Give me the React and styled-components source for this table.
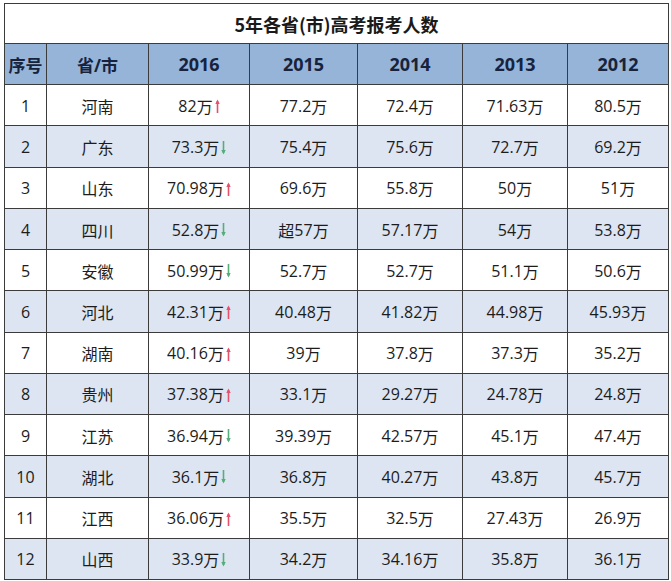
import React from "react";
import styled, { createGlobalStyle } from "styled-components";

const Global = createGlobalStyle`
  html, body { margin: 0; padding: 0; background: #ffffff; }
  body { font-family: "Open Sans", "Noto Sans CJK SC", sans-serif; }
`;

const Page = styled.div`
  padding: 3px 0 0 4px;
`;

const Grid = styled.div`
  display: grid;
  width: 665px;
  height: 577px;
  box-sizing: border-box;
  grid-template-columns: 41px 101px 100px 107px 104px 104px 100px;
  grid-template-rows: 39px repeat(13, 1fr);
  gap: 1px;
  padding: 1px;
  background: #3b3b3b;
`;

const Title = styled.div`
  grid-column: 1 / -1;
  background: #ffffff;
  display: flex;
  align-items: center;
  justify-content: center;
  font-family: "Noto Sans CJK SC", sans-serif;
  font-weight: 700;
  font-size: 18px;
  color: #1a1a1a;
  padding-top: 1px;
`;

const HeadCell = styled.div`
  background: #96b4d8;
  display: flex;
  align-items: center;
  justify-content: center;
  font-family: "Open Sans", "Noto Sans CJK SC", sans-serif;
  font-weight: 700;
  font-size: ${(p) => (p.$cjk ? "17px" : "18px")};
  color: #17233d;
  white-space: nowrap;
`;

const Cell = styled.div`
  background: ${(p) => (p.$shaded ? "#dce5f1" : "#ffffff")};
  display: flex;
  align-items: center;
  justify-content: center;
  font-family: "Open Sans", "Noto Sans CJK SC", sans-serif;
  font-size: 16px;
  color: #1c1c1c;
  white-space: nowrap;
  padding-top: 1px;
`;

const Cjk = styled.span`
  font-family: "Noto Sans CJK SC", sans-serif;
`;

const ArrowSvg = styled.svg`
  margin-left: 2px;
  margin-top: 1px;
  flex: none;
`;

function Arrow({ up }) {
  const color = up ? "#e6506b" : "#56ad7a";
  return (
    <ArrowSvg width="5" height="14" viewBox="0 0 5 14">
      {up ? (
        <>
          <line x1="2.5" y1="2" x2="2.5" y2="14" stroke={color} strokeWidth="1.6" />
          <polygon points="0.3,5 2.5,0.5 4.7,5" fill={color} />
        </>
      ) : (
        <>
          <line x1="2.5" y1="0" x2="2.5" y2="12" stroke={color} strokeWidth="1.6" />
          <polygon points="0.3,9 2.5,13.5 4.7,9" fill={color} />
        </>
      )}
    </ArrowSvg>
  );
}

function Value({ text }) {
  const m = text.match(/^(\D*)([\d.]+)(万)$/);
  if (!m) return <Cjk>{text}</Cjk>;
  return (
    <>
      {m[1] && <Cjk>{m[1]}</Cjk>}
      <span>{m[2]}</span>
      <Cjk>{m[3]}</Cjk>
    </>
  );
}

const rows = [
  ["河南", "82万", true, "77.2万", "72.4万", "71.63万", "80.5万"],
  ["广东", "73.3万", false, "75.4万", "75.6万", "72.7万", "69.2万"],
  ["山东", "70.98万", true, "69.6万", "55.8万", "50万", "51万"],
  ["四川", "52.8万", false, "超57万", "57.17万", "54万", "53.8万"],
  ["安徽", "50.99万", false, "52.7万", "52.7万", "51.1万", "50.6万"],
  ["河北", "42.31万", true, "40.48万", "41.82万", "44.98万", "45.93万"],
  ["湖南", "40.16万", true, "39万", "37.8万", "37.3万", "35.2万"],
  ["贵州", "37.38万", true, "33.1万", "29.27万", "24.78万", "24.8万"],
  ["江苏", "36.94万", false, "39.39万", "42.57万", "45.1万", "47.4万"],
  ["湖北", "36.1万", false, "36.8万", "40.27万", "43.8万", "45.7万"],
  ["江西", "36.06万", true, "35.5万", "32.5万", "27.43万", "26.9万"],
  ["山西", "33.9万", false, "34.2万", "34.16万", "35.8万", "36.1万"],
];

export default function App() {
  return (
    <Page>
      <Global />
      <Grid>
        <Title>5年各省(市)高考报考人数</Title>
        <HeadCell $cjk>序号</HeadCell>
        <HeadCell $cjk>省/市</HeadCell>
        <HeadCell>2016</HeadCell>
        <HeadCell>2015</HeadCell>
        <HeadCell>2014</HeadCell>
        <HeadCell>2013</HeadCell>
        <HeadCell>2012</HeadCell>
        {rows.map((r, i) => {
          const shaded = i % 2 === 1;
          return (
            <React.Fragment key={i}>
              <Cell $shaded={shaded}>{i + 1}</Cell>
              <Cell $shaded={shaded}>
                <Cjk>{r[0]}</Cjk>
              </Cell>
              <Cell $shaded={shaded}>
                <Value text={r[1]} />
                <Arrow up={r[2]} />
              </Cell>
              {r.slice(3).map((v, j) => (
                <Cell key={j} $shaded={shaded}>
                  <Value text={v} />
                </Cell>
              ))}
            </React.Fragment>
          );
        })}
      </Grid>
    </Page>
  );
}
